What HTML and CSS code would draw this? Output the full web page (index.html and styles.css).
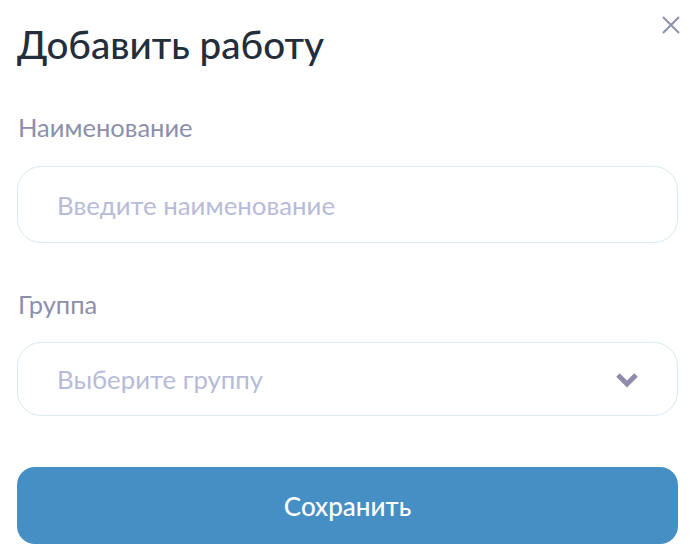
FILE: index.html
```html
<!DOCTYPE html>
<html lang="ru">
<head>
<meta charset="utf-8">
<link rel="stylesheet" href="styles.css">
</head>
<body>
<div class="modal">
  <div class="header">
    <h1 class="title">Добавить работу</h1>
    <button class="close" aria-label="Закрыть">
      <svg width="18" height="18" viewBox="0 0 18 18"><path d="M1 1L17 17M17 1L1 17" stroke="#8f8fae" stroke-width="2" fill="none"/></svg>
    </button>
  </div>
  <div class="field field-name">
    <label class="label">Наименование</label>
    <div class="input"><span class="placeholder">Введите наименование</span></div>
  </div>
  <div class="field field-group">
    <label class="label">Группа</label>
    <div class="input select"><span class="placeholder">Выберите группу</span>
      <svg class="chev" width="24" height="18" viewBox="0 0 24 18"><path d="M3 4L12 13L21 4" stroke="#8e8cab" stroke-width="5" fill="none" stroke-linejoin="miter"/></svg>
    </div>
  </div>
  <button class="save">Сохранить</button>
</div>
</body>
</html>
```
FILE: styles.css
```css
* { box-sizing: border-box; }
html, body { margin: 0; padding: 0; background: #fff; }
body { font-family: Lato, "Noto Sans", sans-serif; }
.modal { width: 698px; height: 560px; padding: 0 20px 0 17px; display: flex; flex-direction: column; }
.header { display: flex; justify-content: space-between; align-items: flex-start; height: 100px; }
.title { margin: 0; padding-top: 21px; font-size: 38.6px; font-weight: 500; color: #232d3b; line-height: 46px; letter-spacing: 0; }
.close { border: 0; background: none; padding: 0; margin: 16px -2px 0 0; width: 18px; height: 18px; }
.close svg { display: block; }
.field { display: flex; flex-direction: column; }
.label { font-size: 25.5px; color: #8d8fab; line-height: 30px; padding-left: 1px; }
.field-name .label { margin-top: 12px; }
.field-name .input { margin-top: 24px; height: 77px; }
.field-group .label { margin-top: 46px; }
.field-group .input { margin-top: 23px; height: 74px; }
.input { border: 1px solid #dbe8ee; border-radius: 24px; display: flex; align-items: center; padding: 0 38px 0 39px; }
.placeholder { font-size: 25.8px; color: #b8bbd8; }
.select { justify-content: space-between; padding-right: 38px; }
.chev { display: block; margin-top: 2px; }
.save { margin-top: 51px; height: 77px; border: 0; border-radius: 18px; background: #468fc5; color: #fff; font-family: Lato, "Noto Sans", sans-serif; font-size: 26px; font-weight: 500; width: 100%; }
```
